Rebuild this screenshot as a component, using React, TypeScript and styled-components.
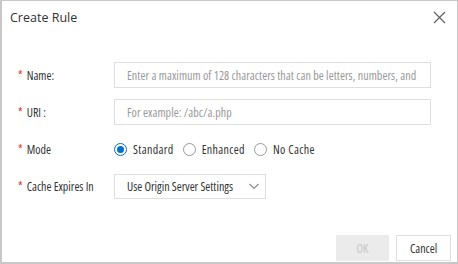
import React, { useState } from 'react';
import styled, { createGlobalStyle } from 'styled-components';

const GlobalStyle = createGlobalStyle`
  html, body {
    margin: 0;
    padding: 0;
    background: #fff;
  }
  body {
    font-family: "Open Sans", "Noto Sans", sans-serif;
    font-stretch: 87.5%;
    color: #333;
  }
`;

const Dialog = styled.div`
  box-sizing: border-box;
  width: 458px;
  height: 264px;
  border: 1px solid #c8c8c8;
  border-left-width: 2px;
  border-bottom-width: 2px;
  background: #fff;
  display: flex;
  flex-direction: column;
`;

const Header = styled.div`
  display: flex;
  justify-content: space-between;
  align-items: center;
  height: 32px;
  padding: 0 8px;

  h3 {
    margin: 0;
    font-size: 12.5px;
    font-stretch: 100%;
    font-weight: 400;
    color: #333;
  }
`;

const CloseButton = styled.button`
  border: none;
  background: none;
  padding: 0;
  width: 20px;
  height: 20px;
  display: flex;
  align-items: center;
  justify-content: center;
  cursor: pointer;
`;

const Body = styled.div`
  flex: 1;
  padding: 29px 24px 0 16px;
  display: flex;
  flex-direction: column;
  gap: 11px;
`;

const Row = styled.div`
  display: flex;
  align-items: center;
  min-height: 26px;
`;

const Label = styled.label`
  width: 96px;
  font-size: 12px;
  color: #333;
  white-space: nowrap;

  &::before {
    content: '*';
    color: #e62e2e;
    margin-right: 4px;
  }
`;

const TextInput = styled.input`
  box-sizing: border-box;
  width: 317px;
  height: 26px;
  border: 1px solid #dedede;
  padding: 0 12px;
  font-family: inherit;
  font-stretch: 87.5%;
  font-size: 12px;
  letter-spacing: 0.07px;
  color: #333;
  outline: none;

  &::placeholder {
    color: #999;
  }
`;

const RadioGroup = styled.div`
  display: flex;
  align-items: center;
  gap: 9px;
`;

const RadioOption = styled.label`
  display: flex;
  align-items: center;
  gap: 6px;
  font-size: 12px;
  letter-spacing: 0.35px;
  color: #333;
  cursor: pointer;
`;

const RadioDot = styled.span<{ $checked: boolean }>`
  box-sizing: border-box;
  width: 13px;
  height: 13px;
  border-radius: 50%;
  border: 1px solid ${(p) => (p.$checked ? '#0070cc' : '#999')};
  display: flex;
  align-items: center;
  justify-content: center;

  &::after {
    content: '';
    width: 7px;
    height: 7px;
    border-radius: 50%;
    background: ${(p) => (p.$checked ? '#0070cc' : 'transparent')};
  }
`;

const Select = styled.div`
  box-sizing: border-box;
  width: 152px;
  height: 25px;
  border: 1px solid #dedede;
  padding: 0 5px 0 12px;
  display: flex;
  align-items: center;
  justify-content: space-between;
  font-size: 12px;
  color: #333;
  white-space: nowrap;
`;

const Footer = styled.div`
  display: flex;
  justify-content: flex-end;
  gap: 7px;
  padding: 0 6px 1px 0;
`;

const Button = styled.button<{ $disabled?: boolean }>`
  box-sizing: border-box;
  height: 26px;
  min-width: ${(p) => (p.$disabled ? 53 : 55)}px;
  padding: 0 12px;
  font-family: inherit;
  font-stretch: 87.5%;
  font-size: 12px;
  border: 1px solid ${(p) => (p.$disabled ? '#ebebeb' : '#dedede')};
  background: ${(p) => (p.$disabled ? '#ebebeb' : '#fff')};
  color: ${(p) => (p.$disabled ? '#c5c5c5' : '#333')};
  cursor: ${(p) => (p.$disabled ? 'not-allowed' : 'pointer')};
`;

const modes = ['Standard', 'Enhanced', 'No Cache'];

const App: React.FC = () => {
  const [mode, setMode] = useState('Standard');

  return (
    <>
      <GlobalStyle />
      <Dialog>
        <Header>
          <h3>Create Rule</h3>
          <CloseButton aria-label="close">
            <svg width="13" height="13" viewBox="0 0 13 13">
              <path d="M1 1L12 12M12 1L1 12" stroke="#666" strokeWidth="1.3" fill="none" />
            </svg>
          </CloseButton>
        </Header>
        <Body>
          <Row>
            <Label>Name:</Label>
            <TextInput placeholder="Enter a maximum of 128 characters that can be letters, numbers, and" />
          </Row>
          <Row>
            <Label>URI :</Label>
            <TextInput placeholder="For example: /abc/a.php" />
          </Row>
          <Row>
            <Label>Mode</Label>
            <RadioGroup>
              {modes.map((m) => (
                <RadioOption key={m} onClick={() => setMode(m)}>
                  <RadioDot $checked={mode === m} />
                  {m}
                </RadioOption>
              ))}
            </RadioGroup>
          </Row>
          <Row>
            <Label>Cache Expires In</Label>
            <Select>
              Use Origin Server Settings
              <svg width="12" height="8" viewBox="0 0 12 8">
                <path d="M1.5 2L6 6.5L10.5 2" stroke="#888" strokeWidth="1.1" fill="none" />
              </svg>
            </Select>
          </Row>
        </Body>
        <Footer>
          <Button $disabled>OK</Button>
          <Button>Cancel</Button>
        </Footer>
      </Dialog>
    </>
  );
};

export default App;
